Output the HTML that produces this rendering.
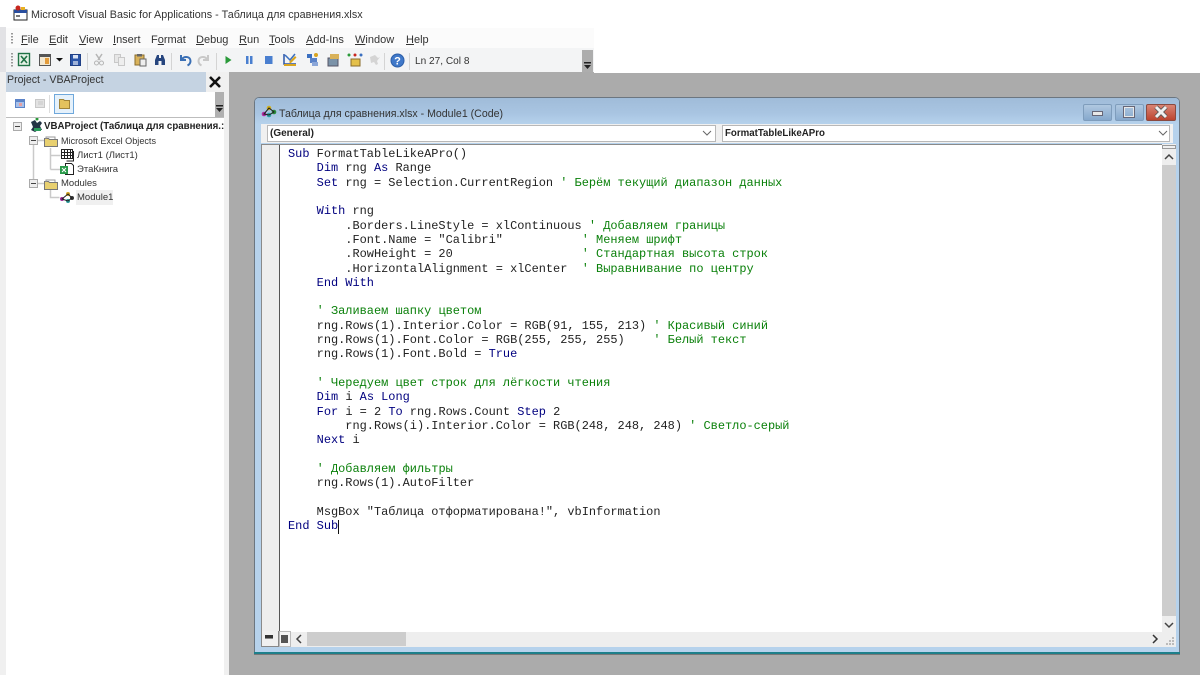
<!DOCTYPE html>
<html><head><meta charset="utf-8">
<style>
html,body{margin:0;padding:0;width:1200px;height:675px;overflow:hidden;background:#ababab;font-family:"Liberation Sans","Noto Sans CJK SC",sans-serif;color:#222}
#w{position:absolute;left:0;top:0;width:1200px;height:675px;overflow:hidden;background:#ababab;filter:blur(.3px)}
div,svg,span.a{position:absolute}
.t{white-space:nowrap}
.m{position:absolute;top:33px;font-size:11px;line-height:14px;white-space:nowrap;color:#333}
.m u{text-decoration:underline}
#code{position:absolute;left:288px;top:147px;font:11.95px/14.31px "Liberation Mono","Noto Sans CJK SC",monospace;color:#222;white-space:pre;margin:0}
.k{color:#00007f}.c{color:#0a800a}
.tr{position:absolute;font-size:9.5px;line-height:12px;white-space:nowrap;color:#333}
.sep{position:absolute;top:53px;width:1px;height:17px;background:#d4d4d4}
</style></head><body><div id="w">
<div style="left:0;top:0;width:1200px;height:28px;background:#fff"></div>
<div style="left:0;top:27px;width:6px;height:45px;background:#e2e2e5"></div>
<div style="left:0;top:72px;width:6px;height:603px;background:#f0f0f0"></div>
<svg style="left:12px;top:5px" width="17" height="17" viewBox="0 0 17 17"><rect x="2" y="5" width="13" height="10" fill="#fff" stroke="#222"/><rect x="2" y="5" width="13" height="3" fill="#2a4f9e"/><rect x="4" y="10" width="4" height="2" fill="#777"/><circle cx="6" cy="3" r="2.5" fill="#c8261e"/><rect x="9" y="2" width="4" height="3" fill="#e8b020"/></svg>
<div class="t" style="left:31px;top:8px;font-size:10.77px;line-height:15px;color:#333">Microsoft Visual Basic for Applications - Таблица для сравнения.xlsx</div>

<div style="left:6px;top:28px;width:1194px;height:20px;background:#fbfbfb"></div>
<div style="left:6px;top:48px;width:588px;height:24px;background:#f3f4f5"></div>
<div style="left:594px;top:28px;width:606px;height:45px;background:#fff"></div>
<div style="left:11px;top:33px;width:2px;height:11px;background-image:linear-gradient(#999 50%,transparent 50%);background-size:2px 3px"></div>
<div style="left:11px;top:53px;width:2px;height:14px;background-image:linear-gradient(#999 50%,transparent 50%);background-size:2px 3px"></div>

<span class="m" style="left:21px"><u>F</u>ile</span>
<span class="m" style="left:49px"><u>E</u>dit</span>
<span class="m" style="left:79px"><u>V</u>iew</span>
<span class="m" style="left:113px"><u>I</u>nsert</span>
<span class="m" style="left:151px">F<u>o</u>rmat</span>
<span class="m" style="left:196px"><u>D</u>ebug</span>
<span class="m" style="left:239px"><u>R</u>un</span>
<span class="m" style="left:269px"><u>T</u>ools</span>
<span class="m" style="left:306px"><u>A</u>dd-Ins</span>
<span class="m" style="left:355px"><u>W</u>indow</span>
<span class="m" style="left:406px"><u>H</u>elp</span>

<!-- toolbar icons -->
<svg style="left:0;top:48px" width="600" height="24" viewBox="0 48 600 24">
<rect x="18.500" y="53.500" width="11" height="12" fill="#e6f2e6" stroke="#217346" stroke-width="1.400"/><path d="M21 56l6 7M27 56l-6 7" stroke="#217346" stroke-width="1.600"/>
<rect x="39.500" y="54.500" width="11" height="11" fill="#f3e7cf" stroke="#555"/><rect x="40" y="55" width="10" height="2" fill="#555"/><rect x="45" y="58" width="4" height="6" fill="#e39b3a"/>
<path d="M56 58h7l-3.500 3.500z" fill="#111"/>
<rect x="70.500" y="54.500" width="10" height="11" fill="#2b55a8" stroke="#1f3f85"/><rect x="73" y="55" width="5" height="3.500" fill="#dbe4f5"/><rect x="73" y="61" width="5" height="4" fill="#9fb2d8"/>
<path d="M96 54l4 6M102 54l-4 6" stroke="#b5b5b5" stroke-width="1.500"/><circle cx="96.500" cy="63" r="2" fill="none" stroke="#b5b5b5"/><circle cx="101.500" cy="63" r="2" fill="none" stroke="#b5b5b5"/>
<rect x="114.500" y="54.500" width="6" height="8" fill="#e6e6e6" stroke="#c8c8c8"/><rect x="118.500" y="57.500" width="6" height="8" fill="#eee" stroke="#c8c8c8"/>
<rect x="135" y="55" width="9" height="10" fill="#d9b25a" stroke="#8a6d2c"/><rect x="137" y="54" width="5" height="2.500" fill="#666"/><rect x="140" y="59" width="6" height="7" fill="#eee" stroke="#666"/>
<path d="M155 65v-5l2-5h2v3h2v-3h2l2 5v5h-3.500v-4h-3v4z" fill="#26457e"/>
<path d="M181 55v5h5M181.500 59.500c3-4 9-3 9 1.500 0 2-1 3.500-3 4.500" fill="none" stroke="#3a6fb5" stroke-width="2"/>
<path d="M208 55v5h-5M207.500 59.500c-3-4-9-3-9 1.500 0 2 1 3.500 3 4.500" fill="none" stroke="#c8c8c8" stroke-width="2"/>
<path d="M225.500 56l6 4-6 4z" fill="#2a9a3a"/>
<rect x="246" y="56" width="2.500" height="8" fill="#4a7fd0"/><rect x="250" y="56" width="2.500" height="8" fill="#4a7fd0"/>
<rect x="265" y="56" width="7.500" height="8" fill="#4a7fd0"/>
<path d="M284 54v10h12" fill="none" stroke="#2b55a8" stroke-width="1.500"/><path d="M285 55l5 5 5-6" fill="none" stroke="#3a6fc0" stroke-width="1.500"/><path d="M289 62l6-6 1.500 1.500-6 6z" fill="#d9a520"/><rect x="284" y="64" width="12" height="2" fill="#d9a520"/>
<rect x="307" y="54" width="5" height="4" fill="#3a6fc0"/><rect x="310" y="58" width="7" height="5" fill="#5b83c8"/><rect x="312" y="62" width="6" height="4" fill="#8aa6d8"/><circle cx="316" cy="55" r="2" fill="#d9a520"/>
<rect x="328" y="58" width="10" height="8" fill="#7a92a8" stroke="#556"/><rect x="330" y="54" width="9" height="5" fill="#d9b25a"/>
<rect x="351" y="59" width="9" height="7" fill="#e4c04a" stroke="#8a6d2c"/><circle cx="349" cy="55" r="1.500" fill="#2a9a3a"/><circle cx="355" cy="55" r="1.500" fill="#c8261e"/><circle cx="361" cy="55" r="1.500" fill="#3a6fc0"/>
<path d="M370 57l5-2 3 3 2-1-3 4 1 3-2 1-2-3-3 1z" fill="#d4d4d4"/>
<circle cx="397.500" cy="60.500" r="6.500" fill="#3f78c9" stroke="#2b5ea8"/><text x="397.500" y="64.500" text-anchor="middle" font-size="11" font-weight="bold" fill="#fff" font-family="Liberation Sans">?</text>
</svg>
<div class="sep" style="left:87px"></div><div class="sep" style="left:171px"></div><div class="sep" style="left:216px"></div><div class="sep" style="left:384px"></div><div class="sep" style="left:409px"></div>
<div class="t" style="left:415px;top:55px;font-size:10.1px;line-height:14px;color:#333">Ln 27, Col 8</div>
<div style="left:582px;top:50px;width:11px;height:22px;background:#adadad"></div>
<svg style="left:582px;top:60px" width="11" height="12"><rect x="2" y="2" width="7" height="1.500" fill="#222"/><path d="M2 5h7l-3.500 4z" fill="#222"/></svg>

<!-- project pane -->
<div style="left:6px;top:72px;width:218px;height:603px;background:#fff"></div>
<div style="left:6px;top:72px;width:218px;height:20px;background:#c5d3e2"></div>
<div class="t" style="left:7px;top:73px;font-size:10.600px;line-height:15px;color:#333">Project - VBAProject</div>
<div style="left:206px;top:72px;width:18px;height:20px;background:#f0f0f0"></div>
<svg style="left:207px;top:74px" width="16" height="16"><path d="M3 3l10 10M13 3l-10 10" stroke="#111" stroke-width="2.600"/></svg>
<div style="left:6px;top:92px;width:218px;height:25px;background:#fff"></div>
<svg style="left:6px;top:92px" width="218" height="26" viewBox="6 92 218 26">
<rect x="15.500" y="99.500" width="9" height="8" fill="#a8c0e8" stroke="#5b83c8"/><rect x="16" y="100" width="8" height="2" fill="#5b83c8"/><rect x="19" y="103" width="3" height="3" fill="#e8a0a0"/>
<rect x="35.500" y="99.500" width="9" height="8" fill="#e2e2e2" stroke="#c8c8c8"/><path d="M38 102h5M38 104h5" stroke="#c8c8c8"/>
<rect x="54.500" y="94.500" width="19" height="19" fill="#e5f1fb" stroke="#6fa8dc"/>
<path d="M59.500 99.500h4l1 1h5v8h-10z" fill="#e3c25e" stroke="#a0843a"/>
<rect x="49" y="95" width="1" height="18" fill="#ddd"/>
</svg>
<div style="left:215px;top:92px;width:9px;height:25px;background:#b0b0b0"></div>
<svg style="left:215px;top:105px" width="9" height="12"><rect x="1" y="0" width="7" height="1.500" fill="#222"/><path d="M1 3h7l-3.500 4z" fill="#222"/></svg>
<div style="left:6px;top:117px;width:218px;height:1px;background:#bdbdbd"></div>
<div style="left:224px;top:72px;width:5px;height:603px;background:#f0f0f0"></div>

<!-- tree -->
<svg style="left:6px;top:118px" width="218" height="100" viewBox="6 118 218 100">
<path d="M33.500 145v34M38 140.500h6M38 183.500h6M50.500 148v21.500M50.500 155.500h10M50.500 169.500h10M50.500 190v7.500h9" fill="none" stroke="#cacaca" stroke-width="1.500"/>
<rect x="13.500" y="122.500" width="8" height="8" fill="#eee" stroke="#aaa"/><path d="M15 126.500h5" stroke="#444"/>
<rect x="29.500" y="136.500" width="8" height="8" fill="#eee" stroke="#aaa"/><path d="M31 140.500h5" stroke="#444"/>
<rect x="29.500" y="179.500" width="8" height="8" fill="#eee" stroke="#aaa"/><path d="M31 183.500h5" stroke="#444"/>
<path d="M31 122l4-2 2 3 3-2 2 2-2 3 2 4h-4l-3 2-4-2 2-3z" fill="#234"/><rect x="34" y="128" width="7" height="3" fill="#2a9a5a"/><circle cx="37" cy="119" r="1.500" fill="#2a9a3a"/>
<path d="M44.500 138.500h4l1 1h8v7h-13z" fill="#e8d070" stroke="#777"/><path d="M46 139v-2h9v2" fill="none" stroke="#999"/>
<path d="M44.500 181.500h4l1 1h8v7h-13z" fill="#e8d070" stroke="#777"/><path d="M46 182v-2h9v2" fill="none" stroke="#999"/>
<rect x="61.500" y="149.500" width="11" height="9" fill="#fff" stroke="#222"/><path d="M61 152.500h12M64.500 150v9M67.500 150v9M70.500 150v9M62 155.500h11" stroke="#222"/><path d="M73.500 151v10h-7" fill="none" stroke="#222"/>
<path d="M65.500 163.500h6l2 2v9h-8z" fill="#fff" stroke="#222"/><rect x="60" y="166" width="8" height="8" fill="#2a9a4a"/><path d="M62 168l4 4M66 168l-4 4" stroke="#fff"/>
<circle cx="62" cy="199" r="2" fill="#a02a9a"/><circle cx="68" cy="194" r="2" fill="#d0a020"/><circle cx="68" cy="201" r="2" fill="#2a9a9a"/><circle cx="72" cy="198" r="2" fill="#333"/><path d="M62 199l6-5 4 4-4 3z" fill="none" stroke="#222"/>
</svg>
<div class="tr" style="left:44px;top:121px;font-weight:bold;font-size:9.700px;color:#222">VBAProject (Таблица для сравнения.:</div>
<div class="tr" style="left:61px;top:135px;font-size:9.100px">Microsoft Excel Objects</div>
<div class="tr" style="left:77px;top:150px">Лист1 (Лист1)</div>
<div class="tr" style="left:77px;top:164px">ЭтаКнига</div>
<div class="tr" style="left:61px;top:178px">Modules</div>
<div style="left:76px;top:190px;width:37px;height:15px;background:#f0f0f0"></div>
<div class="tr" style="left:77px;top:192px">Module1</div>

<!-- code window -->
<div style="left:254px;top:97px;width:926px;height:558px;background:#b6d2ec;border-radius:5px 5px 0 0;box-shadow:inset 0 0 0 1px #6c7680"></div>
<div style="left:255px;top:98px;width:924px;height:26px;background:linear-gradient(#a0bcd9,#a9c5e2 60%,#b6d2ec);border-radius:4px 4px 0 0"></div>
<svg style="left:261px;top:104px" width="16" height="16"><circle cx="3" cy="10" r="2.300" fill="#b02aa0"/><circle cx="8" cy="4" r="2.300" fill="#d0b020"/><circle cx="8" cy="11" r="2.300" fill="#2aa0a0"/><circle cx="13" cy="8" r="2.300" fill="#2a8a3a"/><path d="M3 10l5-6 5 4-5 3z" fill="none" stroke="#222"/></svg>
<div class="t" style="left:279px;top:107px;font-size:10.600px;line-height:15px;color:#333">Таблица для сравнения.xlsx - Module1 (Code)</div>
<div style="left:1083px;top:104px;width:29px;height:17px;background:linear-gradient(#b0c8e0,#86a8cc);border:1px solid #7f9dbc;box-sizing:border-box;border-radius:2px"></div>
<div style="left:1092px;top:111px;width:11px;height:5px;background:#e8e8e8;border:1px solid #667;box-sizing:border-box"></div>
<div style="left:1115px;top:104px;width:29px;height:17px;background:linear-gradient(#b0c8e0,#86a8cc);border:1px solid #7f9dbc;box-sizing:border-box;border-radius:2px"></div>
<div style="left:1123px;top:106px;width:12px;height:12px;border:2px solid #e8e8e8;outline:1px solid #667;outline-offset:-1px;box-sizing:border-box"></div>
<div style="left:1146px;top:104px;width:30px;height:17px;background:linear-gradient(#d98474,#bc4430);border:1px solid #8a4a40;box-sizing:border-box;border-radius:2px"></div>
<svg style="left:1153px;top:105px" width="16" height="15"><path d="M3 2l10 10M13 2l-10 10" stroke="#555" stroke-width="4.500"/><path d="M3 2l10 10M13 2l-10 10" stroke="#f0f0f0" stroke-width="3"/></svg>

<div style="left:261px;top:124px;width:912px;height:19px;background:#f0f0f0"></div>
<div style="left:267px;top:125px;width:449px;height:17px;background:#fff;box-shadow:inset 0 0 0 1px #b8b8b8"></div>
<div style="left:722px;top:125px;width:448px;height:17px;background:#fff;box-shadow:inset 0 0 0 1px #b8b8b8"></div>
<div class="t" style="left:270px;top:128px;font-size:10px;line-height:12px;font-weight:bold;color:#222">(General)</div>
<div class="t" style="left:725px;top:128px;font-size:9.700px;line-height:12px;font-weight:bold;color:#222">FormatTableLikeAPro</div>
<svg style="left:702px;top:130px" width="10" height="7"><path d="M1 1l4 4 4-4" fill="none" stroke="#666"/></svg>
<svg style="left:1158px;top:130px" width="10" height="7"><path d="M1 1l4 4 4-4" fill="none" stroke="#666"/></svg>

<div style="left:261px;top:144px;width:912px;height:503px;background:#fff;box-sizing:border-box;border-top:1px solid #8a8a8a;border-left:1px solid #8a8a8a"></div>
<div style="left:262px;top:145px;width:18px;height:487px;background:#eeeeee;border-right:1px solid #555;box-sizing:border-box"></div>
<pre id="code"><span class="k">Sub</span> FormatTableLikeAPro()
    <span class="k">Dim</span> rng <span class="k">As</span> Range
    <span class="k">Set</span> rng = Selection.CurrentRegion <span class="c">' Берём текущий диапазон данных</span>

    <span class="k">With</span> rng
        .Borders.LineStyle = xlContinuous <span class="c">' Добавляем границы</span>
        .Font.Name = "Calibri"           <span class="c">' Меняем шрифт</span>
        .RowHeight = 20                  <span class="c">' Стандартная высота строк</span>
        .HorizontalAlignment = xlCenter  <span class="c">' Выравнивание по центру</span>
    <span class="k">End With</span>

    <span class="c">' Заливаем шапку цветом</span>
    rng.Rows(1).Interior.Color = RGB(91, 155, 213) <span class="c">' Красивый синий</span>
    rng.Rows(1).Font.Color = RGB(255, 255, 255)    <span class="c">' Белый текст</span>
    rng.Rows(1).Font.Bold = <span class="k">True</span>

    <span class="c">' Чередуем цвет строк для лёгкости чтения</span>
    <span class="k">Dim</span> i <span class="k">As Long</span>
    <span class="k">For</span> i = 2 <span class="k">To</span> rng.Rows.Count <span class="k">Step</span> 2
        rng.Rows(i).Interior.Color = RGB(248, 248, 248) <span class="c">' Светло-серый</span>
    <span class="k">Next</span> i

    <span class="c">' Добавляем фильтры</span>
    rng.Rows(1).AutoFilter

    MsgBox "Таблица отформатирована!", vbInformation
<span class="k">End Sub</span></pre>
<div style="left:338px;top:520px;width:1px;height:14px;background:#111"></div>

<!-- v scrollbar -->
<div style="left:1162px;top:144px;width:14px;height:488px;background:#eeeeee"></div>
<div style="left:1162px;top:145px;width:14px;height:4px;background:#f0f0f0;box-shadow:inset 0 0 0 1px #999"></div>
<svg style="left:1163px;top:153px" width="12" height="8"><path d="M2 6l4-4 4 4" fill="none" stroke="#444" stroke-width="1.500"/></svg>
<div style="left:1162px;top:165px;width:14px;height:451px;background:#cdcdcd"></div>
<svg style="left:1163px;top:621px" width="12" height="8"><path d="M2 2l4 4 4-4" fill="none" stroke="#444" stroke-width="1.500"/></svg>
<!-- h scrollbar -->
<div style="left:262px;top:632px;width:914px;height:15px;background:#eeeeee"></div>
<div style="left:262px;top:631px;width:17px;height:16px;background:#f0f0f0;box-shadow:inset -1px -1px 0 #888"></div>
<div style="left:265px;top:635px;width:8px;height:3px;background:#333"></div>
<div style="left:265px;top:638px;width:8px;height:1px;background:#888"></div>
<div style="left:279px;top:631px;width:12px;height:16px;background:#f6f6f6;box-shadow:inset 0 0 0 1px #bbb"></div>
<div style="left:281px;top:635px;width:7px;height:8px;background:#555"></div>
<svg style="left:295px;top:633px" width="8" height="12"><path d="M6 2l-4 4 4 4" fill="none" stroke="#444" stroke-width="1.500"/></svg>
<div style="left:307px;top:632px;width:99px;height:14px;background:#cdcdcd"></div>
<svg style="left:1151px;top:633px" width="8" height="12"><path d="M2 2l4 4-4 4" fill="none" stroke="#333" stroke-width="1.500"/></svg>
<svg style="left:1165px;top:636px" width="10" height="10"><path d="M7 1h2v2h-2zM4 4h2v2h-2zM7 4h2v2h-2zM1 7h2v2h-2zM4 7h2v2h-2zM7 7h2v2h-2z" fill="#bbb"/></svg>
<div style="left:254px;top:652px;width:926px;height:2px;background:#1d7f8a"></div>
<div style="left:254px;top:654px;width:926px;height:1px;background:#777"></div>
</div></body></html>
